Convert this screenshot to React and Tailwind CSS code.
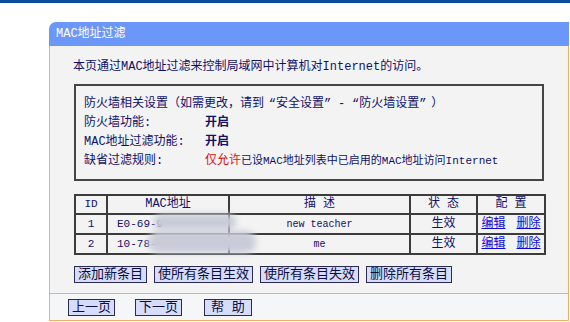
import React from "react";

const F = { fontFamily: '"Liberation Mono","Noto Sans CJK SC",monospace' };

function Btn({ children, className = "" }) {
  return (
    <button
      className={`h-[17px] border border-[#2a2a55] bg-[#d6ddfb] px-[3px] text-[13px] leading-[15px] text-[#0c0c40] ${className}`}
      style={F}
    >
      {children}
    </button>
  );
}

function Blob({ className }) {
  return <div className={`pointer-events-none absolute rounded-full bg-[#c9ccd8] blur-[3px] ${className}`} />;
}

function LQ() {
  return <span className="inline-block w-[12px] text-right">“</span>;
}
function RQ() {
  return <span className="inline-block w-[12px] text-left">”</span>;
}

export default function App() {
  return (
    <div className="h-[322px] w-[570px] overflow-hidden bg-white text-[12px] text-[#10106a]" style={F}>
      <div className="h-[3px] bg-[#0b4c9c]" />
      <div className="ml-[49px] mt-[19px] w-[520px]">
        <div className="flex h-[24px] items-center rounded-tl-[7px] bg-[#6b97f8] pl-[7px] text-[12px] text-white">
          MAC地址过滤
        </div>
        <div className="border-x border-[#f0b260] bg-[#f3f3f3] pb-[10px] pl-[24px] pr-[24px] pt-[12px]">
          <div className="-ml-[1px] leading-[19px]">本页通过MAC地址过滤来控制局域网中计算机对Internet的访问。</div>
          <div className="mt-[7px] w-[470px] border-2 border-[#454545] pb-[8px] pl-[8px] pt-[9px] leading-[19px]">
            <div>
              防火墙相关设置（如需更改，请到<LQ />安全设置<RQ /><span className="mx-[2px]">-</span><LQ />防火墙设置<RQ />）
            </div>
            <div className="flex">
              <span className="w-[121px]">防火墙功能:</span>
              <span className="font-bold">开启</span>
            </div>
            <div className="flex">
              <span className="w-[121px]">MAC地址过滤功能:</span>
              <span className="font-bold">开启</span>
            </div>
            <div className="flex">
              <span className="w-[121px]">缺省过滤规则:</span>
              <span>
                <span className="text-[#e01010]">仅允许</span>
                <span className="text-[11px]">已设MAC地址列表中已启用的MAC地址访问Internet</span>
              </span>
            </div>
          </div>
          <div className="relative mt-[13px] w-[470px]">
            <table className="w-[470px] table-fixed border-collapse border-2 border-[#3c3c3c] text-center">
              <colgroup>
                <col className="w-[32px]" />
                <col className="w-[122px]" />
                <col className="w-[181px]" />
                <col className="w-[67px]" />
                <col className="w-[68px]" />
              </colgroup>
              <tbody>
                <tr className="h-[19px] leading-[15px]">
                  <td className="border-2 border-[#3c3c3c] text-[11px]">ID</td>
                  <td className="border-2 border-[#3c3c3c]">MAC地址</td>
                  <td className="border-2 border-[#3c3c3c]">描 述</td>
                  <td className="border-2 border-[#3c3c3c]">状 态</td>
                  <td className="border-2 border-[#3c3c3c]">配 置</td>
                </tr>
                <tr className="h-[20px] leading-[15px]">
                  <td className="border-2 border-[#3c3c3c] text-[11px]">1</td>
                  <td className="border-2 border-[#3c3c3c] pl-[9px] text-left text-[11px]">E0-69-9</td>
                  <td className="border-2 border-[#3c3c3c] text-[10px]">new teacher</td>
                  <td className="border-2 border-[#3c3c3c]">生效</td>
                  <td className="border-2 border-[#3c3c3c]">
                    <span className="text-[#0a0adf] underline">编辑</span>
                    <span className="ml-[11px] text-[#0a0adf] underline">删除</span>
                  </td>
                </tr>
                <tr className="h-[20px] leading-[15px]">
                  <td className="border-2 border-[#3c3c3c] text-[11px]">2</td>
                  <td className="border-2 border-[#3c3c3c] pl-[9px] text-left text-[11px]">10-78-</td>
                  <td className="border-2 border-[#3c3c3c] text-[10px]">me</td>
                  <td className="border-2 border-[#3c3c3c]">生效</td>
                  <td className="border-2 border-[#3c3c3c]">
                    <span className="text-[#0a0adf] underline">编辑</span>
                    <span className="ml-[11px] text-[#0a0adf] underline">删除</span>
                  </td>
                </tr>
              </tbody>
            </table>
            <Blob className="left-[80px] top-[20px] h-[16px] w-[82px]" />
            <Blob className="left-[74px] top-[37px] h-[22px] w-[108px]" />
          </div>
          <div className="mt-[11px] flex gap-[7px]">
            <Btn>添加新条目</Btn>
            <Btn>使所有条目生效</Btn>
            <Btn>使所有条目失效</Btn>
            <Btn>删除所有条目</Btn>
          </div>
        </div>
        <div className="flex h-[28px] items-center gap-[20px] border border-[#f0b260] bg-[#f5f6f8] pl-[18px]">
          <Btn>上一页</Btn>
          <Btn>下一页</Btn>
          <Btn className="ml-[2px] px-[6px]">帮 助</Btn>
        </div>
      </div>
    </div>
  );
}
